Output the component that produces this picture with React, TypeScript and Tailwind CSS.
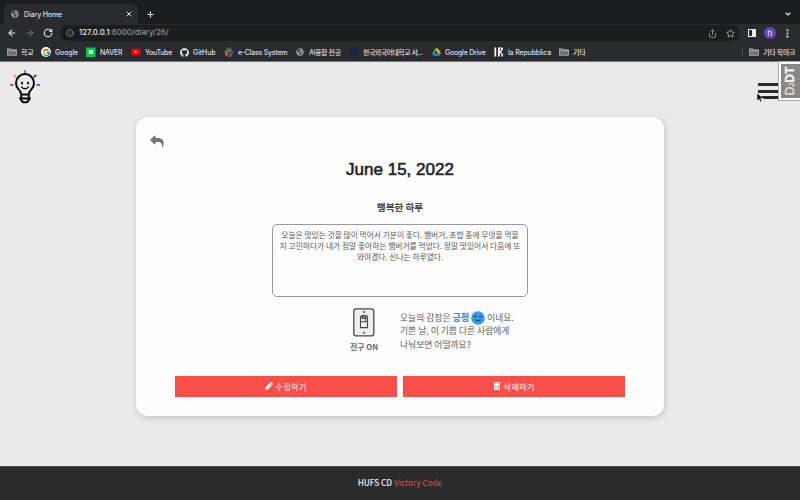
import type { ReactNode } from "react";
import { FaTrashAlt, FaGithub, FaGlobeAmericas } from "react-icons/fa";
import { FcGoogle } from "react-icons/fc";
import { ArrowLeft, ArrowRight, RotateCw, Info, Share, Star, X, Plus, ChevronDown, EllipsisVertical } from "lucide-react";

const Folder = () => (
  <svg width="10" height="8" viewBox="0 0 10 8" fill="#6f7072" stroke="#b5b6b8" strokeWidth=".8">
    <path d="M.5 7.3V.8h3.3l.8 1h4.9v5.5zM.5 2.8h9" />
  </svg>
);

const Google = () => (
  <span className="flex size-[10px] shrink-0 items-center justify-center rounded-full bg-white">
    <FcGoogle size={9} />
  </span>
);

const Naver = () => (
  <svg width="10" height="10" viewBox="0 0 10 10">
    <path fill="#07c653" d="M0 .5h9.5V10H0z" />
    <path fill="#fff" d="M2.8 3h1.3l1.2 1.8V3h1.4v4H5.3L4.2 5.2V7H2.8z" />
  </svg>
);

const YouTube = () => (
  <svg width="10" height="8" viewBox="0 0 10 8">
    <rect y=".8" x=".4" width="9" height="6.2" rx="1.2" fill="#f40000" />
    <path fill="#fff" d="M3.8 2.6v2.7l2.4-1.35z" />
  </svg>
);

const Hand = () => (
  <svg width="10" height="10" viewBox="0 0 10 10" fill="none" strokeLinecap="round" strokeWidth="1.2">
    <path stroke="#d8863a" d="M3.7 5 3 2" />
    <path stroke="#57a05d" d="M5.2 4.7V1.2" />
    <path stroke="#3c91d0" d="m6.3 5 .9-2.8" />
    <path stroke="#7b5ac0" d="M7.2 6.8 9 5M4 9l2.3.1L7.6 7.6" />
    <path stroke="#d2a035" d="m2.9 6.7-1.9-2M2.8 8 1.6 7.6" />
    <path stroke="#db5060" d="m4 7 1.8.2" />
  </svg>
);

const Drive = () => (
  <svg width="9" height="8" viewBox="0 0 10 9">
    <path fill="#1da462" d="M3.4.5 0 6.4l1.6 2.2L5 2.9z" />
    <path fill="#fbc117" d="M3.4.5h3.2L10 6.2H6.8z" />
    <path fill="#3d7ff0" d="M3.2 6.2H10L8.4 8.6H1.6z" />
    <path fill="#e64235" d="M7.6 6.2H10L8.4 8.6z" />
  </svg>
);

const Repubblica = () => (
  <svg width="10" height="10" viewBox="0 0 10 10">
    <path fill="#fff" d="M.5.5h1.7v9H.5zM4 .5h4.8v2.3L7 5l2 2.2v2.3H7.4V7L5.8 5.6v3.9H4z" />
    <path fill="#28292c" d="M5.8 1.6h1.3v2H5.8z" />
  </svg>
);

const bookmarks: { icon: ReactNode; label: string; cell: string; text: string }[] = [
  { icon: <Folder />, label: "학교", cell: "w-[34px]", text: "tracking-[-0.2px]" },
  { icon: <Google />, label: "Google", cell: "w-[45px]", text: "tracking-[-0.15px]" },
  { icon: <Naver />, label: "NAVER", cell: "w-[45px]", text: "tracking-[-0.25px]" },
  { icon: <YouTube />, label: "YouTube", cell: "w-[48px]", text: "tracking-[-0.3px]" },
  { icon: <FaGithub size={9} color="#fff" />, label: "GitHub", cell: "w-[45px]", text: "tracking-[-0.1px]" },
  { icon: <Hand />, label: "e-Class System", cell: "w-[71px]", text: "tracking-[-0.24px]" },
  { icon: <FaGlobeAmericas size={8} color="#999b9e" />, label: "AI융합 전공", cell: "w-[54px]", text: "tracking-[-0.4px]" },
  { icon: <span className="size-[10px] rounded-full bg-[#1c2740]" />, label: "한국외국어대학교 서...", cell: "w-[82px]", text: "tracking-[-0.55px]" },
  { icon: <Drive />, label: "Google Drive", cell: "w-[63px]", text: "tracking-[-0.23px]" },
  { icon: <Repubblica />, label: "la Repubblica", cell: "w-[65px]", text: "tracking-[-0.15px]" },
  { icon: <Folder />, label: "기타", cell: "w-[40px]", text: "tracking-[-0.3px]" },
];

function Browser() {
  return (
    <header className="h-[62px] border-b border-[#77787a] bg-[#2a2b2f] font-['Inter','Noto_Sans_CJK_KR',sans-serif] font-medium text-[#dedfe1]">
      <div className="flex h-6 items-end bg-[#1c1d1f]">
        <div className="ml-1 flex h-5 w-[134px] items-center rounded-t-[5px] bg-[#2a2b2f] pl-[7px] pr-[5px]">
          <FaGlobeAmericas size={8} color="#96979b" />
          <span className="ml-[5px] text-[7px] leading-none tracking-[-0.12px]">Diary Home</span>
          <X className="ml-auto" size={8} strokeWidth={3} />
        </div>
        <Plus className="mb-[5px] ml-2" size={9} strokeWidth={3} />
        <ChevronDown className="mb-[6px] ml-auto mr-2" size={8} strokeWidth={3.5} />
      </div>
      <div className="flex h-[18px] items-center pl-[7px]">
        <ArrowLeft size={10} strokeWidth={2.6} />
        <ArrowRight className="ml-2" size={10} strokeWidth={2.3} color="#77787b" />
        <RotateCw className="ml-2" size={10} strokeWidth={2.8} />
        <div className="ml-[7px] flex h-4 w-[680px] items-center rounded-full bg-[#1c1d1f] pl-[6px] pr-[5px]">
          <Info size={8} color="#a2a3a5" />
          <span className="ml-[5px] whitespace-nowrap text-[7.8px] leading-none text-[#939497]">
            <span className="text-[#eeeeef]">127.0.0.1</span>:8000/diary/26/
          </span>
          <Share className="ml-auto" size={9} color="#aaabad" />
          <Star className="ml-[9px]" size={9} color="#c4c5c7" />
        </div>
        <span className="ml-2 flex h-2 w-2 justify-end border border-[#eee] bg-[#2a2b2f]"><span className="w-[3px] bg-[#eee]" /></span>
        <span className="ml-2 flex size-3 items-center justify-center rounded-full bg-[#6844b8] text-[8px] leading-none">h</span>
        <EllipsisVertical className="ml-[6px]" size={11} strokeWidth={2.8} />
      </div>
      <nav className="flex h-[20px] items-center pl-[7px] text-[7px] leading-none">
        {bookmarks.map((b) => (
          <div key={b.label} className={`flex shrink-0 items-center whitespace-nowrap ${b.cell}`}>
            <span className="mr-1 flex w-[10px] shrink-0 justify-center">{b.icon}</span>
            <span className={b.text}>{b.label}</span>
          </div>
        ))}
        <span className="ml-auto h-2 w-px bg-[#4b4c50]" />
        <div className="ml-[6px] mr-[5px] flex items-center gap-1 whitespace-nowrap">
          <Folder />
          <span className="tracking-[-0.4px]">기타 북마크</span>
        </div>
      </nav>
    </header>
  );
}

const Bulb = () => (
  <svg width="32" height="36" viewBox="0 0 32 36" fill="none" strokeLinecap="round">
    <g strokeWidth="2" strokeLinecap="butt">
      <path stroke="#cf5148" d="M0 15H3.4" />
      <path stroke="#ec9867" d="m3.8 5 2.6 2.2" />
      <path stroke="#5b9b78" d="M15 .2v3.2" />
      <path stroke="#295578" d="m23.8 7.2 2.5-2.2" />
      <path stroke="#6262a0" d="M26.6 15H30" />
    </g>
    <g stroke="#080808" strokeWidth="2">
      <path d="M11.2 24.6c0-2.6-1.2-3.7-2.6-5.2a9 9 0 1 1 12.8 0c-1.4 1.5-2.6 2.6-2.6 5.2zM10 28.4h10M11.2 28.6v1.7l1.9 2h3.8l1.9-2v-1.7M11.2 24.6v3.3M18.8 24.6v3.3" />
      <path d="M11.7 17c1.1 2.2 5.5 2.2 6.6 0" strokeWidth="1.5" />
      <path d="M12 12.7v.9M18 12.7v.9" strokeWidth="2" />
    </g>
  </svg>
);

const LightSwitch = () => (
  <svg width="22" height="29" viewBox="0 0 22 29" fill="none" stroke="#484848">
    <rect x=".8" y=".8" width="20" height="27" rx="2.4" fill="#efefef" strokeWidth="1.3" />
    <path d="M7.5 9 9 7.6h4.8l.7 1.2v10.8H7.5zM7.5 9h5v4.8h-5M12.5 10h2M7.5 13.8h7" strokeWidth="1.1" />
    <path d="M8.5 9.4h3.5v1.2H8.5z" fill="#555" strokeWidth=".4" />
    <circle cx="11" cy="4" r=".8" fill="#222" strokeWidth=".4" />
    <circle cx="11" cy="24.7" r=".8" fill="#222" strokeWidth=".4" />
  </svg>
);

const Smile = () => (
  <svg className="ml-[2px] mr-[2px] shrink-0" width="14" height="14" viewBox="0 0 14 14" fill="none" stroke="#183c60" strokeWidth="1.2" strokeLinecap="round">
    <circle cx="7" cy="7" r="6.8" fill="#359bed" stroke="none" />
    <path d="M3.3 5.2q1 .6 2 0M8.7 5.2q1 .6 2 0M4.8 8.9q2.2 1.7 4.4 0" />
  </svg>
);

const Reply = () => (
  <svg width="14" height="13" viewBox="0 0 14 13" fill="#747474">
    <path d="M.3 4.6 4.8.4q.7-.4.7.4v2.1h1.9c4.7 0 6.3 2.4 6.3 5.3 0 1.7-.7 3.1-1.3 4-.2.3-.6.2-.5-.2.4-3.6-.7-5-4.5-5H5.5v2q0 .8-.7.4L.3 5.3Q0 5 .3 4.6z" />
  </svg>
);

const Pencil = () => (
  <svg width="8" height="8" viewBox="0 0 8 8" fill="#fff">
    <path d="M.3 7.7.7 5.1 4.4 1.3l2.3 2.3-3.8 3.8zM4.9.9 5.8.1q.4-.2.7 0l1.3 1.3q.2.3 0 .7L7.1 3z" />
  </svg>
);

export default function App() {
  return (
    <div className="relative flex h-[500px] w-[800px] flex-col overflow-hidden bg-[#eaeaea] font-['Noto_Sans_CJK_KR',sans-serif]">
      <Browser />
      <main className="flex h-[404px] flex-col">
        <div className="flex h-[55px] justify-between pl-[10px] pr-[22px] pt-2">
          <Bulb />
          <div className="mt-[13px] flex h-4 w-5 flex-col justify-between">
            <span className="h-[3px] bg-[#27282a]" />
            <span className="h-[3px] bg-[#27282a]" />
            <span className="h-[3px] bg-[#27282a]" />
          </div>
        </div>
        <section className="mx-auto flex h-[299px] w-[528px] flex-col items-center rounded-[12px] bg-[#fdfdfd] shadow-[1px_2px_6px_rgba(0,0,0,0.16)]">
          <div className="h-[42px] w-full pl-[14px] pt-[18px]">
            <Reply />
          </div>
          <h1 className="h-[41px] whitespace-nowrap font-['Liberation_Sans',sans-serif] text-[17px] font-normal leading-[22px] text-[#222426] [-webkit-text-stroke:0.6px_#222426]">June 15, 2022</h1>
          <h2 className="h-[24px] whitespace-nowrap text-[9.6px] font-medium leading-[14px] text-[#303030] [-webkit-text-stroke:0.2px_#303030]">행복한 하루</h2>
          <div className="h-[73px] w-[256px] whitespace-nowrap rounded-[5px] border border-[#999] pt-[4px] text-center text-[7.75px] leading-[11px] text-[#595959]">
            <p>오늘은 맛있는 것을 많이 먹어서 기분이 좋다. 햄버거, 초밥 중에 무엇을 먹을</p>
            <p>지 고민하다가 내가 정말 좋아하는 햄버거를 먹었다. 정말 맛있어서 다음에 또</p>
            <p>와야겠다. 신나는 하루였다.</p>
          </div>
          <div className="flex h-[79px] w-full pl-[212px] pt-[11px]">
            <div className="flex w-[32px] flex-col items-center">
              <LightSwitch />
              <span className="mt-[4px] whitespace-nowrap text-[7.8px] font-bold leading-[12px] text-[#686868]">전구 ON</span>
            </div>
            <div className="ml-5 whitespace-nowrap pt-[3px] text-[8.8px] leading-[13.3px]">
              <div className="flex h-[13.3px] items-center">
                <span className="text-[#606060]">오늘의 감정은</span>
                <span className="ml-[2px] text-[9px] font-bold text-[#2196f3] [-webkit-text-stroke:0.2px_#2196f3]">긍정</span>
                <Smile />
                <span className="text-[#606060]">이네요.</span>
              </div>
              <p className="text-[#606060]">기쁜 날, 이 기쁨 다른 사람에게</p>
              <p className="text-[#606060]">나눠보면 어떨까요?</p>
            </div>
          </div>
          <div className="flex w-[450px] gap-[6px] text-[8.5px] leading-none text-[#fff5f5]">
            <button className="flex h-[21px] flex-1 items-center justify-center gap-[2px] bg-[#f84f49] pb-[1px]"><Pencil />수정하기</button>
            <button className="flex h-[21px] flex-1 items-center justify-center gap-[2px] bg-[#f84f49] pb-[1px]"><FaTrashAlt size={8} color="#fff" />삭제하기</button>
          </div>
        </section>
      </main>
      <footer className="flex h-[34px] items-center justify-center gap-[2px] border-t border-[#4a4d4b] bg-[#2b2b2b] pb-[2px] text-[8.2px] leading-none text-[#e3504c]">
        <span className="font-medium text-[#f3f3f3]">HUFS CD</span>
        <span>Victory Code</span>
      </footer>
      <aside className="absolute right-0 top-[62px] flex h-[38px] w-[21px] items-center justify-center border-2 border-r-0 border-white bg-[#888] outline outline-1 outline-[#aaa]">
        <span className="-rotate-90 whitespace-nowrap font-['Liberation_Sans',sans-serif] text-[12px] leading-none text-[#e6e6dc] [-webkit-text-stroke:0.3px_#e6e6dc]">D<span className="text-[8px]">J</span><b className="text-white">DT</b></span>
      </aside>
      <svg className="absolute left-[756px] top-[92px]" width="8" height="11" viewBox="0 0 8 11">
        <path d="M1 1v8l2-2 1.3 3 1.5-.7L4.5 6.5h2.8z" fill="#080808" stroke="#eee" strokeWidth=".6" />
      </svg>
    </div>
  );
}
